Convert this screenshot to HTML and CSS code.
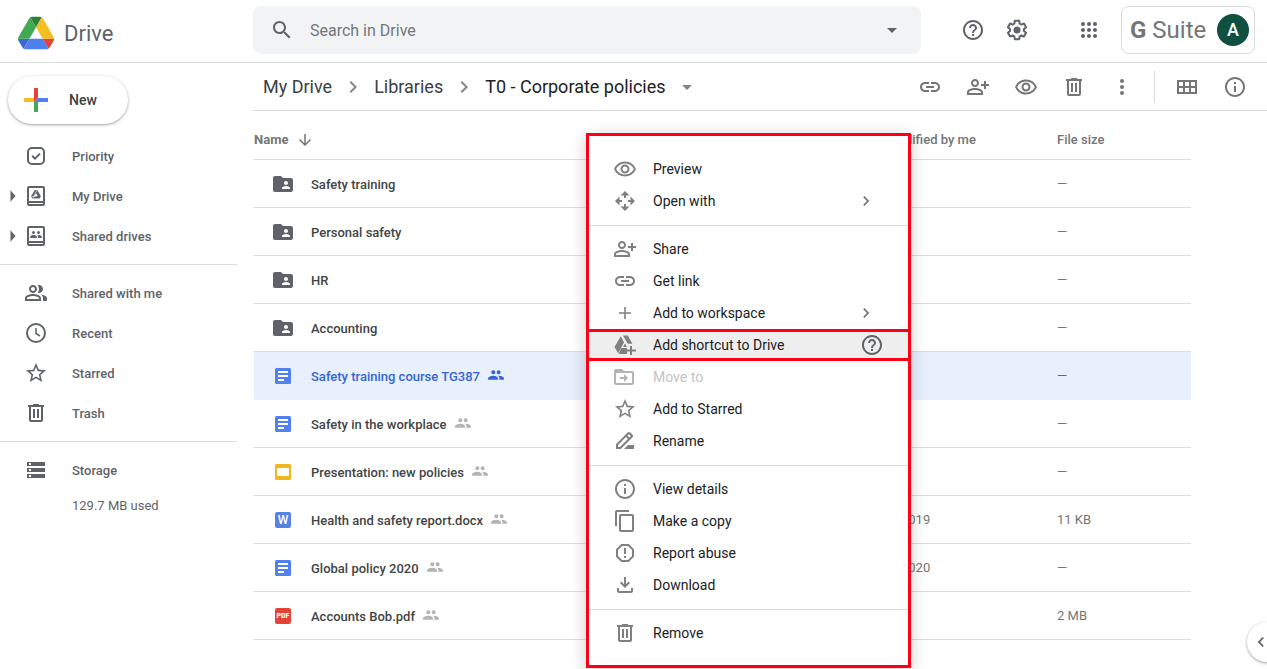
FILE: index.html
```html
<!DOCTYPE html>
<html lang="en">
<head>
  <meta charset="utf-8">
  <title>T0 - Corporate policies - Drive</title>
  <link rel="stylesheet" href="styles.css">
</head>
<body>
  <!-- Icon set -->
  <svg class="sprite" aria-hidden="true">
    <symbol id="i-search" viewBox="0 0 24 24"><path d="M15.5 14h-.79l-.28-.27C15.41 12.59 16 11.11 16 9.5 16 5.91 13.09 3 9.5 3S3 5.91 3 9.5 5.91 16 9.5 16c1.61 0 3.09-.59 4.23-1.57l.27.28v.79l5 4.99L20.49 19l-4.99-5zm-6 0C7.01 14 5 11.99 5 9.5S7.01 5 9.5 5 14 7.01 14 9.5 11.99 14 9.5 14z"/></symbol>
    <symbol id="i-caret" viewBox="0 0 24 24"><path d="M7 10l5 5 5-5z"/></symbol>
    <symbol id="i-expand" viewBox="0 0 24 24"><path d="M9 5l6 7-6 7z"/></symbol>
    <symbol id="i-help" viewBox="0 0 24 24"><path d="M11 18h2v-2h-2v2zm1-16C6.48 2 2 6.48 2 12s4.48 10 10 10 10-4.48 10-10S17.52 2 12 2zm0 18c-4.41 0-8-3.59-8-8s3.59-8 8-8 8 3.59 8 8-3.59 8-8 8zm0-14c-2.21 0-4 1.79-4 4h2c0-1.1.9-2 2-2s2 .9 2 2c0 2-3 1.75-3 5h2c0-2.25 3-2.5 3-5 0-2.21-1.79-4-4-4z"/></symbol>
    <symbol id="i-gear" viewBox="0 0 24 24"><path d="M13.85 22.25h-3.7c-.74 0-1.36-.54-1.45-1.27l-.27-1.89c-.27-.14-.53-.29-.79-.46l-1.8.72c-.7.26-1.47-.03-1.81-.65L2.2 15.53c-.35-.66-.2-1.44.36-1.88l1.53-1.19c-.01-.15-.02-.3-.02-.46 0-.15.01-.31.02-.46l-1.52-1.19c-.59-.45-.74-1.26-.37-1.88l1.85-3.19c.34-.62 1.11-.9 1.79-.63l1.81.73c.26-.17.52-.32.78-.46l.27-1.91c.09-.7.71-1.25 1.44-1.25h3.7c.74 0 1.36.54 1.45 1.27l.27 1.89c.27.14.53.29.79.46l1.8-.72c.71-.26 1.48.03 1.82.65l1.84 3.18c.36.66.2 1.44-.36 1.88l-1.52 1.19c.01.15.02.3.02.46s-.01.31-.02.46l1.52 1.19c.56.45.72 1.23.37 1.86l-1.86 3.22c-.34.62-1.11.9-1.8.63l-1.8-.72c-.26.17-.52.32-.78.46l-.27 1.91c-.1.68-.72 1.22-1.46 1.22zm-3.23-2h2.76l.37-2.55.53-.22c.44-.18.88-.44 1.34-.78l.45-.34 2.38.96 1.38-2.4-2.03-1.58.07-.56c.03-.26.06-.51.06-.78s-.03-.53-.06-.78l-.07-.56 2.03-1.58-1.39-2.4-2.39.96-.45-.35c-.42-.32-.87-.58-1.33-.77l-.52-.22-.37-2.55h-2.76l-.37 2.55-.53.21c-.44.19-.88.44-1.34.79l-.45.33-2.38-.95-1.39 2.39 2.03 1.58-.07.56a7 7 0 0 0-.06.79c0 .26.02.53.06.78l.07.56-2.03 1.58 1.38 2.4 2.39-.96.45.35c.43.33.86.58 1.33.77l.53.22.38 2.55z"/><circle cx="12" cy="12" r="3.5"/></symbol>
    <symbol id="i-apps" viewBox="0 0 24 24"><path d="M6 8c1.1 0 2-.9 2-2s-.9-2-2-2-2 .9-2 2 .9 2 2 2zm6 12c1.1 0 2-.9 2-2s-.9-2-2-2-2 .9-2 2 .9 2 2 2zm-6 0c1.1 0 2-.9 2-2s-.9-2-2-2-2 .9-2 2 .9 2 2 2zm0-6c1.1 0 2-.9 2-2s-.9-2-2-2-2 .9-2 2 .9 2 2 2zm6 0c1.1 0 2-.9 2-2s-.9-2-2-2-2 .9-2 2 .9 2 2 2zm4-8c0 1.1.9 2 2 2s2-.9 2-2-.9-2-2-2-2 .9-2 2zm-4 2c1.1 0 2-.9 2-2s-.9-2-2-2-2 .9-2 2 .9 2 2 2zm6 6c1.1 0 2-.9 2-2s-.9-2-2-2-2 .9-2 2 .9 2 2 2zm0 6c1.1 0 2-.9 2-2s-.9-2-2-2-2 .9-2 2 .9 2 2 2z"/></symbol>
    <symbol id="i-priority" viewBox="0 0 24 24"><rect x="4" y="4" width="16" height="16" rx="4" fill="none" stroke="currentColor" stroke-width="2"/><path d="M8.200 11.800l2.800 2.800 5-5" fill="none" stroke="currentColor" stroke-width="2"/></symbol>
    <symbol id="i-mydrive" viewBox="0 0 24 24"><path d="M19 2H5c-1.100 0-2 .9-2 2v16c0 1.100.9 2 2 2h14c1.100 0 2-.9 2-2V4c0-1.100-.9-2-2-2zm0 18H5v-1h14v1zm0-3H5V4h14v13z"/><path d="M10.700 6h2.600l3.600 6.200-1.300 2.300H8.400l-1.300-2.300L10.700 6zm1.300 3.200l-1.800 3.100h3.600L12 9.200z" fill-rule="evenodd"/><path d="M13.200 5.500l-4.500 9.500M8 12.300h4" stroke="#fff" stroke-width=".6" fill="none"/></symbol>
    <symbol id="i-shareddrive" viewBox="0 0 24 24"><path d="M19 2H5c-1.100 0-2 .9-2 2v16c0 1.100.9 2 2 2h14c1.100 0 2-.9 2-2V4c0-1.100-.9-2-2-2zm0 18H5v-1h14v1zm0-3H5V4h14v13z"/><circle cx="9.500" cy="8.500" r="1.500"/><circle cx="14.500" cy="8.500" r="1.500"/><path d="M6 14v-.9c0-1.500 2.200-2.100 3.500-2.100s3.500.6 3.500 2.100v.9H6zm8 0v-1c0-.7-.3-1.300-.8-1.800l1.300-.2c1.300 0 3.500.6 3.500 2.100v.9h-4z"/></symbol>
    <symbol id="i-people" viewBox="0 0 24 24"><path d="M9 12c2.210 0 4-1.790 4-4s-1.790-4-4-4-4 1.790-4 4 1.790 4 4 4zm0-6c1.100 0 2 .9 2 2s-.9 2-2 2-2-.9-2-2 .9-2 2-2zM9 13c-2.670 0-8 1.340-8 4v3h16v-3c0-2.660-5.330-4-8-4zm6 5H3v-1c0-.64 3.130-2 6-2s6 1.360 6 2v1zM15 12c2.210 0 4-1.790 4-4s-1.790-4-4-4c-.47 0-.91.1-1.330.24C14.500 5.270 15 6.580 15 8s-.5 2.730-1.330 3.760c.42.14.86.24 1.330.24zM16.660 13.130C18.030 14.060 19 15.320 19 17v3h4v-3c0-1.920-3.490-3.160-6.340-3.870z"/></symbol>
    <symbol id="i-clock" viewBox="0 0 24 24"><circle cx="12" cy="12" r="9" fill="none" stroke="currentColor" stroke-width="2"/><path d="M12 7v5.500l4 2.500" fill="none" stroke="currentColor" stroke-width="1.500"/></symbol>
    <symbol id="i-star" viewBox="0 0 24 24"><path d="M22 9.240l-7.190-.62L12 2 9.190 8.630 2 9.240l5.460 4.730L5.820 21 12 17.270 18.180 21l-1.630-7.030L22 9.240zM12 15.400l-3.760 2.270 1-4.280-3.320-2.880 4.380-.38L12 6.100l1.710 4.040 4.380.38-3.320 2.880 1 4.280L12 15.400z"/></symbol>
    <symbol id="i-trash" viewBox="0 0 24 24"><path d="M15 4V3H9v1H4v2h1v13c0 1.100.9 2 2 2h10c1.100 0 2-.9 2-2V6h1V4h-5zm2 15H7V6h10v13zM9 8h2v9H9zm4 0h2v9h-2z"/></symbol>
    <symbol id="i-storage" viewBox="0 0 24 24"><path d="M3 20h18v-4H3v4zm2-3h2v2H5v-2zM3 4v4h18V4H3zm4 3H5V5h2v2zm-4 7h18v-4H3v4zm2-3h2v2H5v-2z"/></symbol>
    <symbol id="i-chevron" viewBox="0 0 24 24"><path d="M8.590 16.590L13.170 12 8.590 7.410 10 6l6 6-6 6z"/></symbol>
    <symbol id="i-left" viewBox="0 0 24 24"><path d="M15.410 7.410L14 6l-6 6 6 6 1.410-1.410L10.830 12z"/></symbol>
    <symbol id="i-link" viewBox="0 0 24 24"><path d="M17 7h-4v2h4c1.650 0 3 1.350 3 3s-1.350 3-3 3h-4v2h4c2.760 0 5-2.240 5-5s-2.240-5-5-5zm-6 8H7c-1.650 0-3-1.350-3-3s1.350-3 3-3h4V7H7c-2.760 0-5 2.240-5 5s2.240 5 5 5h4v-2zm-3-4h8v2H8z"/></symbol>
    <symbol id="i-adduser" viewBox="0 0 24 24"><path d="M9 12c2.210 0 4-1.790 4-4s-1.790-4-4-4-4 1.790-4 4 1.790 4 4 4zm0-6c1.100 0 2 .9 2 2s-.9 2-2 2-2-.9-2-2 .9-2 2-2zM9 13c-2.670 0-8 1.340-8 4v3h16v-3c0-2.660-5.330-4-8-4zm6 5H3v-1c0-.64 3.130-2 6-2s6 1.360 6 2v1zM20 9V6h-2v3h-3v2h3v3h2v-3h3V9z"/></symbol>
    <symbol id="i-eye" viewBox="0 0 24 24"><path d="M12 6.500c3.790 0 7.170 2.130 8.820 5.500-1.650 3.370-5.020 5.500-8.820 5.500S4.830 15.370 3.180 12C4.830 8.630 8.210 6.500 12 6.500m0-2C7 4.500 2.730 7.610 1 12c1.730 4.390 6 7.500 11 7.500s9.270-3.110 11-7.500c-1.730-4.390-6-7.500-11-7.500zm0 5c1.380 0 2.500 1.120 2.500 2.500s-1.120 2.500-2.500 2.500-2.500-1.120-2.500-2.500 1.120-2.500 2.500-2.500m0-2c-2.480 0-4.500 2.020-4.500 4.500s2.020 4.500 4.500 4.500 4.500-2.020 4.500-4.500-2.020-4.500-4.500-4.500z"/></symbol>
    <symbol id="i-more" viewBox="0 0 24 24"><circle cx="12" cy="6" r="2"/><circle cx="12" cy="12" r="2"/><circle cx="12" cy="18" r="2"/></symbol>
    <symbol id="i-grid" viewBox="0 0 24 24"><path d="M2 5v14h20V5H2zm6 2v4H4V7h4zm-4 6h4v4H4v-4zm6 4v-4h4v4h-4zm10 0h-4v-4h4v4zm-4-6V7h4v4h-4zm-2-4v4h-4V7h4z"/></symbol>
    <symbol id="i-info" viewBox="0 0 24 24"><path d="M11 7h2v2h-2zm0 4h2v6h-2zm1-9C6.480 2 2 6.480 2 12s4.480 10 10 10 10-4.480 10-10S17.520 2 12 2zm0 18c-4.410 0-8-3.590-8-8s3.590-8 8-8 8 3.590 8 8-3.590 8-8 8z"/></symbol>
    <symbol id="i-down" viewBox="0 0 24 24"><path d="M20 12l-1.410-1.410L13 16.170V4h-2v12.170l-5.580-5.590L4 12l8 8 8-8z"/></symbol>
    <symbol id="i-folder" viewBox="0 0 24 24"><path d="M20 6h-8l-2-2H4c-1.100 0-1.990.9-1.990 2L2 18c0 1.100.9 2 2 2h16c1.100 0 2-.9 2-2V8c0-1.100-.9-2-2-2zm-5 3c1.100 0 2 .9 2 2s-.9 2-2 2-2-.9-2-2 .9-2 2-2zm4 8h-8v-1c0-1.330 2.670-2 4-2s4 .67 4 2v1z"/></symbol>
    <symbol id="i-doc" viewBox="0 0 24 24"><rect x="4" y="4" width="16" height="16" rx="1.500" fill="#5181f0"/><path d="M7 7h10v2H7zm0 4h10v2H7zm0 4h6v2H7z" fill="#fff"/></symbol>
    <symbol id="i-slides" viewBox="0 0 24 24"><rect x="4" y="4" width="16" height="16" rx="1.500" fill="#f2b71f"/><path d="M6 8h12v8H6z" fill="#fff"/></symbol>
    <symbol id="i-group" viewBox="0 0 24 24"><path d="M16 11c1.660 0 2.990-1.340 2.990-3S17.660 5 16 5s-3 1.340-3 3 1.340 3 3 3zm-8 0c1.660 0 2.990-1.340 2.990-3S9.660 5 8 5 5 6.340 5 8s1.340 3 3 3zm0 2c-2.330 0-8 1.170-8 4.500V19h15v-1.500c0-3.330-4.670-4.500-7-4.500zm8 0c-.29 0-.62.02-.97.050 1.160.84 1.970 1.970 1.970 3.450V19h7v-1.500c0-3.330-5.670-4.500-8-4.500z"/></symbol>
    <symbol id="i-openwith" viewBox="0 0 24 24"><path d="M12 2l4.500 4.500h-3.500V9h-2V6.500H7.500zM12 22l-4.500-4.500H11V15h2v2.500h3.500zM2 12l4.500-4.500V11H9v2H6.500v3.500zM22 12l-4.500 4.500V13H15v-2h2.500V7.500z"/></symbol>
    <symbol id="i-plus" viewBox="0 0 24 24"><path d="M11.200 6h1.600v5.200H18v1.600h-5.200V18h-1.600v-5.200H6v-1.600h5.200z"/></symbol>
    <symbol id="i-shortcut" viewBox="0 0 24 24"><path d="M8.200 2.500h6.600l4.600 8.200h-4.600L9.900 2.500zM7.700 3.300l3.400 5.900-5.900 11L1.500 14zM8.300 15h5.700v6H5.600zM12 10.400l2 3.600h-3.900z"/><path d="M17 13h2v3.500h4v2h-4V22h-2v-3.500h-3.500v-2H17z"/></symbol>
    <symbol id="i-moveto" viewBox="0 0 24 24"><path d="M19 6h-8L9 4H3c-1.100 0-2 .9-2 2v12c0 1.100.9 2 2 2h16c1.100 0 2-.9 2-2V8c0-1.100-.9-2-2-2zm0 12H3V8h16v10zm-8-1l4-4-4-4v3H7v2h4z"/></symbol>
    <symbol id="i-rename" viewBox="0 0 24 24"><path d="M18.400 4.600l-1-1c-.8-.8-2-.8-2.800 0L3 15.200V20h4.800L19.400 8.400c.8-.8.8-2 0-2.800zM6.900 18H5v-1.900l8-8 1.900 1.900zM16.300 8.600l-1.900-1.900L16 5.100 17.900 7zM15 16l-4 4h10v-4z"/></symbol>
    <symbol id="i-copy" viewBox="0 0 24 24"><path d="M16 1H4c-1.100 0-2 .9-2 2v14h2V3h12V1zm3 4H8c-1.100 0-2 .9-2 2v14c0 1.100.9 2 2 2h11c1.100 0 2-.9 2-2V7c0-1.100-.9-2-2-2zm0 16H8V7h11v14z"/></symbol>
    <symbol id="i-report" viewBox="0 0 24 24"><path d="M15.730 3H8.270L3 8.270v7.460L8.270 21h7.460L21 15.730V8.270L15.730 3zM19 14.900L14.900 19H9.100L5 14.900V9.100L9.100 5h5.800L19 9.100v5.800zM11 7h2v6h-2zm0 8h2v2h-2z"/></symbol>
    <symbol id="i-download" viewBox="0 0 24 24"><path d="M11 4h2v7.200l2.600-2.600L17 10l-5 5-5-5 1.400-1.400 2.600 2.600zM4 15h2v3h12v-3h2v3c0 1.100-.9 2-2 2H6c-1.100 0-2-.9-2-2z"/></symbol>
  </svg>

  <header class="topbar">
    <a class="brand" href="#">
      <svg class="brand-logo" viewBox="0 0 87 78" aria-hidden="true">
        <path fill="#3f67d2" d="m6.600 66.850 3.850 6.650c.8 1.400 1.950 2.500 3.300 3.300l13.750-23.800h-27.500c0 1.550.4 3.100 1.200 4.500z"/>
        <path fill="#41a955" d="m43.650 25-13.750-23.800c-1.350.8-2.500 1.900-3.300 3.300l-25.400 44a9.060 9.060 0 0 0 -1.200 4.500h27.500z"/>
        <path fill="#e5433a" d="m73.550 76.800c1.350-.8 2.500-1.900 3.300-3.300l1.600-2.750 7.650-13.250c.8-1.400 1.200-2.950 1.200-4.500h-27.500l5.850 11.500z"/>
        <path fill="#2d8138" d="m43.650 25 13.750-23.800c-1.350-.8-2.900-1.200-4.500-1.200h-18.500c-1.600 0-3.150.45-4.500 1.200z"/>
        <path fill="#5080f0" d="m59.800 53h-32.300l-13.750 23.800c1.350.8 2.900 1.200 4.500 1.200h50.800c1.600 0 3.150-.45 4.500-1.200z"/>
        <path fill="#f5bf24" d="m73.400 26.500-12.700-22c-.8-1.400-1.950-2.500-3.300-3.300l-13.750 23.800 16.150 28h27.450c0-1.550-.4-3.100-1.200-4.500z"/>
      </svg>
      <span>Drive</span>
    </a>
    <form class="search">
      <button class="icon-btn" type="button" aria-label="Search"><svg class="icon"><use href="#i-search"/></svg></button>
      <input type="text" placeholder="Search in Drive" aria-label="Search in Drive">
      <button class="icon-btn" type="button" aria-label="Search options"><svg class="icon"><use href="#i-caret"/></svg></button>
    </form>
    <div class="top-actions">
      <button class="icon-btn" aria-label="Support"><svg class="icon"><use href="#i-help"/></svg></button>
      <button class="icon-btn" aria-label="Settings"><svg class="icon"><use href="#i-gear"/></svg></button>
      <button class="icon-btn apps" aria-label="Google apps"><svg class="icon"><use href="#i-apps"/></svg></button>
      <button class="account"><span class="suite"><b>G</b> Suite</span><span class="avatar">A</span></button>
    </div>
  </header>

  <div class="layout">
    <aside class="sidebar">
      <button class="new-btn">
        <svg viewBox="0 0 36 36" aria-hidden="true">
          <path fill="#41a955" d="M16 16v14h4V20z"/>
          <path fill="#5181f0" d="M30 16H20l-4 4h14z"/>
          <path fill="#f5bf24" d="M6 16v4h10l4-4z"/>
          <path fill="#e5433a" d="M20 16V6h-4v14z"/>
        </svg>
        New
      </button>
      <nav>
        <div class="nav-group">
          <a class="nav-item" href="#"><span class="expand"></span><svg class="icon"><use href="#i-priority"/></svg>Priority</a>
          <a class="nav-item" href="#"><svg class="expand"><use href="#i-expand"/></svg><svg class="icon"><use href="#i-mydrive"/></svg>My Drive</a>
          <a class="nav-item" href="#"><svg class="expand"><use href="#i-expand"/></svg><svg class="icon"><use href="#i-shareddrive"/></svg>Shared drives</a>
        </div>
        <div class="nav-group">
          <a class="nav-item" href="#"><span class="expand"></span><svg class="icon"><use href="#i-people"/></svg>Shared with me</a>
          <a class="nav-item" href="#"><span class="expand"></span><svg class="icon"><use href="#i-clock"/></svg>Recent</a>
          <a class="nav-item" href="#"><span class="expand"></span><svg class="icon"><use href="#i-star"/></svg>Starred</a>
          <a class="nav-item" href="#"><span class="expand"></span><svg class="icon"><use href="#i-trash"/></svg>Trash</a>
        </div>
        <div class="nav-group">
          <a class="nav-item" href="#"><span class="expand"></span><svg class="icon"><use href="#i-storage"/></svg>Storage</a>
          <p class="quota">129.7 MB used</p>
        </div>
      </nav>
    </aside>

    <main>
      <div class="toolbar">
        <div class="breadcrumb">
          <a href="#">My Drive</a>
          <svg><use href="#i-chevron"/></svg>
          <a href="#">Libraries</a>
          <svg><use href="#i-chevron"/></svg>
          <a class="current" href="#">T0 - Corporate policies</a>
          <svg><use href="#i-caret"/></svg>
        </div>
        <div class="tools">
          <button class="icon-btn" aria-label="Get link"><svg class="icon"><use href="#i-link"/></svg></button>
          <button class="icon-btn" aria-label="Share"><svg class="icon"><use href="#i-adduser"/></svg></button>
          <button class="icon-btn" aria-label="Preview"><svg class="icon"><use href="#i-eye"/></svg></button>
          <button class="icon-btn" aria-label="Remove"><svg class="icon"><use href="#i-trash"/></svg></button>
          <button class="icon-btn" aria-label="More actions"><svg class="icon"><use href="#i-more"/></svg></button>
        </div>
        <div class="tools view-tools">
          <button class="icon-btn" aria-label="Grid view"><svg class="icon"><use href="#i-grid"/></svg></button>
          <button class="icon-btn" aria-label="View details"><svg class="icon"><use href="#i-info"/></svg></button>
        </div>
      </div>

      <div class="list">
        <table class="files">
          <thead>
            <tr>
              <th><span class="sort">Name <svg><use href="#i-down"/></svg></span></th>
              <th class="col-date">Last modified by me</th>
              <th class="col-size">File size</th>
            </tr>
          </thead>
          <tbody>
            <tr><td><div class="file"><svg class="icon"><use href="#i-folder"/></svg>Safety training</div></td><td></td><td>—</td></tr>
            <tr><td><div class="file"><svg class="icon"><use href="#i-folder"/></svg>Personal safety</div></td><td></td><td>—</td></tr>
            <tr><td><div class="file"><svg class="icon"><use href="#i-folder"/></svg>HR</div></td><td></td><td>—</td></tr>
            <tr><td><div class="file"><svg class="icon"><use href="#i-folder"/></svg>Accounting</div></td><td></td><td>—</td></tr>
            <tr class="selected"><td><div class="file"><svg class="icon"><use href="#i-doc"/></svg>Safety training course TG387<svg class="shared"><use href="#i-group"/></svg></div></td><td></td><td>—</td></tr>
            <tr><td><div class="file"><svg class="icon"><use href="#i-doc"/></svg>Safety in the workplace<svg class="shared"><use href="#i-group"/></svg></div></td><td></td><td>—</td></tr>
            <tr><td><div class="file"><svg class="icon"><use href="#i-slides"/></svg>Presentation: new policies<svg class="shared"><use href="#i-group"/></svg></div></td><td></td><td>—</td></tr>
            <tr><td><div class="file"><span class="badge word">W</span>Health and safety report.docx<svg class="shared"><use href="#i-group"/></svg></div></td><td class="date">2019</td><td>11 KB</td></tr>
            <tr><td><div class="file"><svg class="icon"><use href="#i-doc"/></svg>Global policy 2020<svg class="shared"><use href="#i-group"/></svg></div></td><td class="date">2020</td><td>—</td></tr>
            <tr><td><div class="file"><span class="badge pdf">PDF</span>Accounts Bob.pdf<svg class="shared"><use href="#i-group"/></svg></div></td><td></td><td>2 MB</td></tr>
          </tbody>
        </table>
      </div>
    </main>
  </div>

  <div class="menu" role="menu">
    <div class="menu-group">
      <button class="menu-item" role="menuitem"><svg class="icon"><use href="#i-eye"/></svg>Preview</button>
      <button class="menu-item" role="menuitem"><svg class="icon"><use href="#i-openwith"/></svg>Open with<svg class="more"><use href="#i-chevron"/></svg></button>
    </div>
    <div class="menu-group">
      <button class="menu-item" role="menuitem"><svg class="icon"><use href="#i-adduser"/></svg>Share</button>
      <button class="menu-item" role="menuitem"><svg class="icon"><use href="#i-link"/></svg>Get link</button>
      <button class="menu-item" role="menuitem"><svg class="icon"><use href="#i-plus"/></svg>Add to workspace<svg class="more"><use href="#i-chevron"/></svg></button>
      <button class="menu-item highlight" role="menuitem"><svg class="icon"><use href="#i-shortcut"/></svg>Add shortcut to Drive<svg class="hint"><use href="#i-help"/></svg></button>
      <button class="menu-item" role="menuitem" disabled><svg class="icon"><use href="#i-moveto"/></svg>Move to</button>
      <button class="menu-item" role="menuitem"><svg class="icon"><use href="#i-star"/></svg>Add to Starred</button>
      <button class="menu-item" role="menuitem"><svg class="icon"><use href="#i-rename"/></svg>Rename</button>
    </div>
    <div class="menu-group">
      <button class="menu-item" role="menuitem"><svg class="icon"><use href="#i-info"/></svg>View details</button>
      <button class="menu-item" role="menuitem"><svg class="icon"><use href="#i-copy"/></svg>Make a copy</button>
      <button class="menu-item" role="menuitem"><svg class="icon"><use href="#i-report"/></svg>Report abuse</button>
      <button class="menu-item" role="menuitem"><svg class="icon"><use href="#i-download"/></svg>Download</button>
    </div>
    <div class="menu-group">
      <button class="menu-item" role="menuitem"><svg class="icon"><use href="#i-trash"/></svg>Remove</button>
    </div>
  </div>

  <button class="panel-toggle" aria-label="Show side panel"><svg><use href="#i-left"/></svg></button>
</body>
</html>
```
FILE: styles.css
```css
* {
  box-sizing: border-box;
}

body {
  margin: 0;
  position: relative;
  min-height: 100vh;
  overflow: hidden;
  background: #fff;
  color: #5f6368;
  font-family: Roboto, Arial, sans-serif;
  font-size: 13px;
}

a {
  color: inherit;
  text-decoration: none;
}

button,
input {
  border: none;
  background: none;
  padding: 0;
  color: inherit;
  font: inherit;
}

button {
  cursor: pointer;
}

svg {
  display: block;
  flex: none;
  fill: currentColor;
}

.sprite {
  display: none;
}

.icon {
  width: 24px;
  height: 24px;
}

/* Top bar */
.topbar {
  display: flex;
  align-items: center;
  height: 63px;
  padding: 0 12px 2px 18px;
  border-bottom: 1px solid #dadce0;
}

.brand {
  display: flex;
  align-items: center;
  gap: 10px;
  width: 235px;
  padding-top: 6px;
  font-size: 22px;
}

.brand-logo {
  width: 36px;
  height: 34px;
}

.search {
  display: flex;
  flex: 1;
  align-items: center;
  gap: 16px;
  height: 48px;
  padding: 0 17px;
  border-radius: 8px;
  background: #f1f3f4;
}

.search input {
  flex: 1;
  min-width: 0;
  font-size: 16px;
  outline: none;
}

.search input::placeholder {
  color: #74777b;
}

.top-actions {
  display: flex;
  align-items: center;
  gap: 20px;
  margin-left: 40px;
}

.apps {
  margin-left: 28px;
}

.account {
  display: flex;
  align-items: center;
  justify-content: space-between;
  width: 134px;
  height: 48px;
  padding: 0 5px 0 8px;
  border: 1px solid #dadce0;
  border-radius: 8px;
}

.suite {
  color: #757575;
  font-size: 24px;
}

.avatar {
  width: 32px;
  border-radius: 50%;
  background: #0f5040;
  color: #fff;
  font-size: 18px;
  font-weight: 500;
  line-height: 32px;
}

/* Sidebar */
.layout {
  display: flex;
}

.sidebar {
  width: 237px;
  margin-right: 16px;
  padding-top: 13px;
}

.new-btn {
  display: flex;
  align-items: center;
  gap: 15px;
  width: 120px;
  height: 48px;
  margin: 0 0 12px 8px;
  padding-left: 10px;
  border-radius: 24px;
  box-shadow: 0 1px 2px rgba(60, 64, 67, 0.3), 0 1px 3px 1px rgba(60, 64, 67, 0.15);
  color: #3c4043;
  font-size: 14px;
  font-weight: 500;
}

.new-btn svg {
  width: 36px;
  height: 36px;
}

.nav-group + .nav-group {
  margin-top: 8px;
  padding-top: 8px;
  border-top: 1px solid #dadce0;
}

.nav-item {
  display: flex;
  align-items: center;
  height: 40px;
  padding-left: 3px;
  font-weight: 500;
}

.expand {
  width: 20px;
  height: 20px;
  margin-right: 1px;
}

.nav-item .icon {
  margin-right: 24px;
}

.quota {
  margin: 0 0 0 72px;
  line-height: 32px;
}

/* Toolbar */
main {
  flex: 1;
  min-width: 0;
}

.toolbar {
  display: flex;
  align-items: center;
  height: 48px;
  padding: 0 20px 0 10px;
  border-bottom: 1px solid #dadce0;
  color: #757575;
}

.breadcrumb {
  display: flex;
  flex: 1;
  align-items: center;
  gap: 9px;
  color: #3c4043;
  font-size: 18px;
  white-space: nowrap;
}

.breadcrumb svg {
  width: 24px;
  height: 24px;
  color: #80868b;
}

.breadcrumb .current {
  color: #202124;
}

.tools {
  display: flex;
  gap: 24px;
}

.view-tools {
  margin-left: 20px;
  padding: 4px 0 4px 20px;
  border-left: 1px solid #dadce0;
}

/* File list */
.list {
  margin: 1px 76px 0 1px;
}

.files {
  width: 100%;
  border-spacing: 0;
  table-layout: fixed;
  color: #757575;
}

.files th {
  height: 48px;
  padding: 8px 0 0;
  border-bottom: 1px solid #dadce0;
  font-weight: 500;
  text-align: left;
  white-space: nowrap;
}

.col-date {
  width: 199px;
}

.col-size {
  width: 134px;
}

.sort {
  display: flex;
  align-items: center;
  gap: 8px;
  font-weight: 700;
}

.sort svg {
  width: 18px;
  height: 18px;
}

.files td {
  height: 48px;
  padding: 0;
  border-bottom: 1px solid #dadce0;
}

.files .date {
  padding-left: 43px;
}

.file {
  display: flex;
  align-items: center;
  padding: 1px 0 0 17px;
  color: #444;
  font-weight: 500;
}

.file .icon {
  margin-right: 16px;
  color: #5f6368;
}

.shared {
  width: 16px;
  height: 16px;
  margin: 0 0 2px 8px;
  color: #b4b4b4;
}

.badge {
  width: 16px;
  height: 16px;
  margin: 0 20px 0 4px;
  border-radius: 2px;
  color: #fff;
  line-height: 16px;
  text-align: center;
}

.word {
  background: #5682e3;
  font-size: 12px;
}

.pdf {
  background: #e5433a;
  font-size: 7px;
  font-weight: 900;
}

.selected td {
  border-color: #e8f0fe;
  background: #e8f0fe;
  color: #3664d4;
}

.selected .file,
.selected .shared {
  color: #3664d4;
}

/* Context menu */
.menu {
  position: absolute;
  top: 133px;
  left: 586px;
  width: 325px;
  padding: 17px 0 16px;
  border: 3px solid #fb0016;
  background: #fff;
  box-shadow: 0 4px 16px rgba(0, 0, 0, 0.2);
  color: #202124;
  font-size: 14px;
}

.menu-group + .menu-group {
  margin-top: 8px;
  padding-top: 7px;
  border-top: 1px solid #dadce0;
}

.menu-item {
  display: flex;
  align-items: center;
  gap: 16px;
  width: 100%;
  height: 32px;
  padding: 0 24px;
}

.menu-item .icon {
  color: #808080;
}

.menu-item .more {
  width: 20px;
  height: 20px;
  margin-left: auto;
  margin-right: 8px;
  color: #757575;
}

.menu-item .hint {
  width: 24px;
  height: 24px;
  margin-left: auto;
  color: #5f6368;
}

.menu-item.highlight {
  border-top: 3px solid #fb0016;
  border-bottom: 3px solid #fb0016;
  background: #eee;
}

.menu-item:disabled {
  color: #c4c4c4;
}

.menu-item:disabled .icon {
  color: #b4b4b4;
}

/* Side panel toggle, half off the right edge */
.panel-toggle {
  position: absolute;
  top: 622px;
  right: -20px;
  width: 40px;
  height: 40px;
  padding-left: 4px;
  border-radius: 50%;
  background: #fff;
  box-shadow: 0 1px 3px rgba(60, 64, 67, 0.5);
}

.panel-toggle svg {
  width: 20px;
  height: 20px;
}
```
